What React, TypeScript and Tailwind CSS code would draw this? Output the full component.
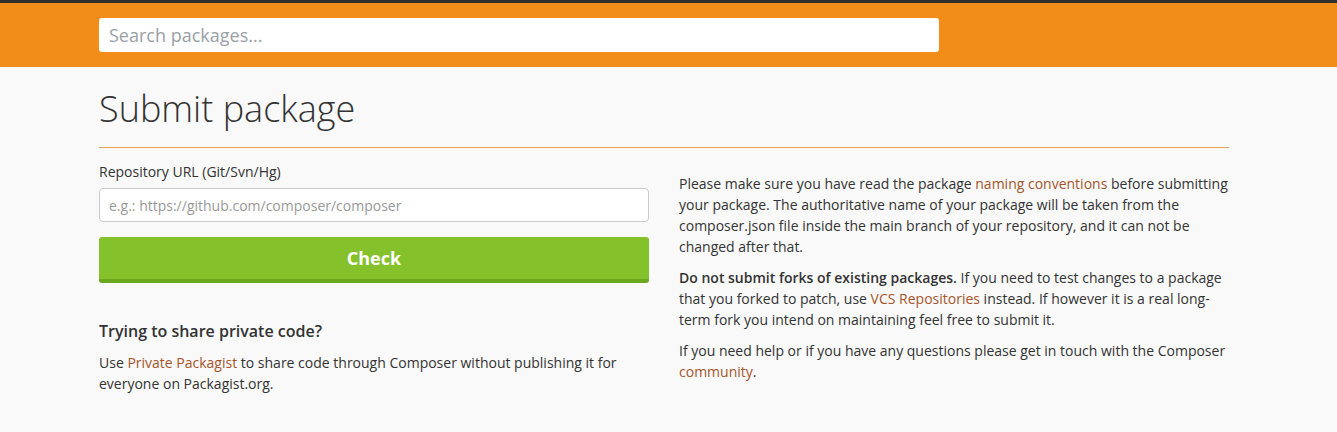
import React from 'react';

const LINK = 'text-[#a5552a] hover:underline';

export default function App() {
  return (
    <div className="min-h-[432px] bg-[#f9f9f9] font-['Open_Sans',sans-serif] text-[#333] text-[14px] leading-[21px]">
      {/* Header */}
      <div className="h-[3px] bg-[#2f2f2f]" />
      <div className="bg-[#f28d1a] h-[64px] pt-[15px]">
        <div className="ml-[99px] w-[840px]">
          <input
            type="text"
            placeholder="Search packages..."
            className="w-full h-[34px] bg-white rounded-[3px] px-[10px] text-[18px] text-[#555] placeholder:text-[#9aa0a6] outline-none"
          />
        </div>
      </div>

      {/* Content */}
      <div className="ml-[99px] w-[1130px]">
        <div className="border-b border-[#f0a050] pt-[21px] pb-[17px]">
          <h1 className="text-[36px] leading-[42px] font-light text-[#333]">Submit package</h1>
        </div>

        <div className="flex gap-[30px]">
          {/* Left column */}
          <div className="w-[550px] pt-[14px]">
            <label className="block text-[14px] leading-[20px] mb-[6px]">Repository URL (Git/Svn/Hg)</label>
            <input
              type="text"
              placeholder="e.g.: https://github.com/composer/composer"
              className="w-full h-[34px] bg-white border border-[#ccc] rounded-[4px] px-[9px] text-[14px] placeholder:text-[#999] outline-none"
            />
            <button className="mt-[15px] w-full h-[46px] bg-[#84c12a] border-b-[4px] border-[#6aa91e] rounded-[3px] text-white text-[18px] font-bold">
              Check
            </button>

            <h4 className="mt-[37px] text-[16px] leading-[22px] font-semibold text-[#333]">Trying to share private code?</h4>
            <p className="mt-[10px]">
              Use <a className={LINK}>Private Packagist</a> to share code through Composer without publishing it for everyone on Packagist.org.
            </p>
          </div>

          {/* Right column */}
          <div className="w-[550px] pt-[25px]">
            <p>
              Please make sure you have read the package <a className={LINK}>naming conventions</a> before submitting your package. The authoritative name of your package will be taken from the composer.json file inside the main branch of your repository, and it can not be changed after that.
            </p>
            <p className="mt-[10px]">
              <strong className="font-semibold">Do not submit forks of existing packages.</strong> If you need to test changes to a package that you forked to patch, use <a className={LINK}>VCS Repositories</a> instead. If however it is a real long-term fork you intend on maintaining feel free to submit it.
            </p>
            <p className="mt-[10px]">
              If you need help or if you have any questions please get in touch with the Composer <a className={LINK}>community</a>.
            </p>
          </div>
        </div>
      </div>
    </div>
  );
}
